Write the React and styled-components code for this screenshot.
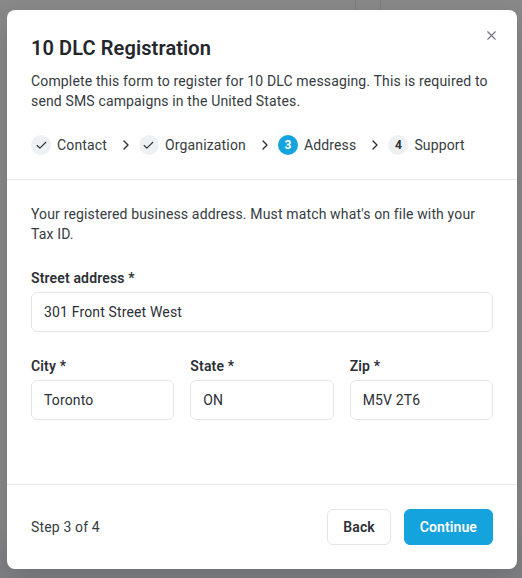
import React from 'react';
import styled, { createGlobalStyle } from 'styled-components';
import { Check, ChevronRight, X } from 'lucide-react';

const GlobalStyle = createGlobalStyle`
  * { box-sizing: border-box; }
  html, body { margin: 0; padding: 0; }
  body {
    font-family: Roboto, "Noto Sans", "Liberation Sans", sans-serif;
    color: #2b3036;
    letter-spacing: 0.15px;
    -webkit-font-smoothing: antialiased;
  }
`;

// ─── page behind the dialog ────────────────────────────────────────────────
const Page = styled.div`
  width: 522px;
  height: 578px;
  position: relative;
  overflow: hidden;
  background: linear-gradient(#f9f9f9 0, #f9f9f9 520px, #e7edf3 560px);
`;

const PageTopBar = styled.div`
  display: flex;
  height: 10px;
  padding-left: 355px;
  gap: 24px;
`;

const PageDivider = styled.div`
  width: 1px;
  background: #e4e4e4;
`;

// ─── overlay + dialog ──────────────────────────────────────────────────────
const Overlay = styled.div`
  position: absolute;
  inset: 0;
  background: rgba(0, 0, 0, 0.45);
  display: flex;
  align-items: flex-start;
  padding: 10px 5px 9px 7px;
`;

const Dialog = styled.div`
  position: relative;
  width: 510px;
  height: 559px;
  background: #fff;
  border-radius: 8px;
  display: flex;
  flex-direction: column;
  box-shadow: 0 10px 30px rgba(0, 0, 0, 0.15);
`;

const CloseButton = styled.button`
  position: absolute;
  top: 15px;
  right: 16px;
  width: 20px;
  height: 20px;
  border: 0;
  background: none;
  padding: 0;
  display: flex;
  align-items: center;
  justify-content: center;
  color: #6f757c;
  cursor: pointer;
`;

const Header = styled.div`
  padding: 24px 24px 24px;
  border-bottom: 1px solid #e6e9ed;
`;

const Title = styled.h2`
  margin: 0;
  font-size: 20px;
  line-height: 28px;
  font-weight: 600;
  letter-spacing: 0.1px;
  color: #23272c;
`;

const Lead = styled.p`
  margin: ${({ $top }) => $top || 0} 0 0;
  font-size: 14px;
  line-height: 20px;
  color: #363b41;
`;

const Steps = styled.div`
  display: flex;
  align-items: center;
  margin-top: 24px;
  height: 20px;
`;

const Step = styled.div`
  display: flex;
  align-items: center;
  gap: 6px;
  font-size: 14px;
  line-height: 20px;
  color: #363b41;
`;

const StepDot = styled.span`
  width: 20px;
  height: 20px;
  border-radius: 50%;
  display: inline-flex;
  align-items: center;
  justify-content: center;
  font-size: 12px;
  font-weight: 700;
  letter-spacing: 0;
  background: ${({ $current }) => ($current ? '#14a3dc' : '#eef1f4')};
  color: ${({ $current }) => ($current ? '#fff' : '#2b3036')};
`;

const Sep = styled.span`
  display: inline-flex;
  margin: 0 5px 0 11px;
  color: #2b3036;
`;

const Body = styled.div`
  flex: 1;
  padding: 24px;
`;

const Field = styled.label`
  display: flex;
  flex-direction: column;
  gap: 4px;
  min-width: 0;
`;

const Label = styled.span`
  font-size: 14px;
  line-height: 20px;
  font-weight: 600;
  color: #2b3036;
`;

const Input = styled.input`
  width: 100%;
  height: 40px;
  border: 1px solid #e2e6ea;
  border-radius: 6px;
  padding: 0 12px;
  font-family: inherit;
  font-size: 14px;
  letter-spacing: inherit;
  color: #2b3036;
  background: #fff;
  outline: none;
`;

const Stack = styled.div`
  display: flex;
  flex-direction: column;
  gap: 24px;
  margin-top: 24px;
`;

const Row = styled.div`
  display: grid;
  grid-template-columns: repeat(3, 1fr);
  gap: 16px;
`;

const Footer = styled.div`
  display: flex;
  align-items: center;
  justify-content: space-between;
  padding: 24px;
  border-top: 1px solid #e6e9ed;
`;

const StepCount = styled.span`
  font-size: 14px;
  color: #363b41;
`;

const Actions = styled.div`
  display: flex;
  gap: 13px;
`;

const Button = styled.button`
  height: 36px;
  padding: 0 15px;
  border-radius: 6px;
  font-family: inherit;
  font-size: 14px;
  font-weight: 600;
  letter-spacing: 0.1px;
  cursor: pointer;
  border: 1px solid ${({ $primary }) => ($primary ? '#14a3dc' : '#e2e6ea')};
  background: ${({ $primary }) => ($primary ? '#14a3dc' : '#fff')};
  color: ${({ $primary }) => ($primary ? '#fff' : '#2b3036')};
`;

const steps = [
  { label: 'Contact', done: true },
  { label: 'Organization', done: true },
  { label: 'Address', n: 3, current: true },
  { label: 'Support', n: 4 },
];

export default function App() {
  return (
    <>
      <GlobalStyle />
      <Page>
        <PageTopBar>
          <PageDivider />
          <PageDivider />
        </PageTopBar>

        <Overlay>
          <Dialog role="dialog">
            <CloseButton aria-label="Close">
              <X size={15} strokeWidth={1.75} />
            </CloseButton>

            <Header>
              <Title>10 DLC Registration</Title>
              <Lead $top="9px">
                Complete this form to register for 10 DLC messaging. This is required to send SMS
                campaigns in the United States.
              </Lead>
              <Steps>
                {steps.map((s, i) => (
                  <React.Fragment key={s.label}>
                    {i > 0 && (
                      <Sep>
                        <ChevronRight size={16} strokeWidth={2} />
                      </Sep>
                    )}
                    <Step>
                      <StepDot $current={s.current}>
                        {s.done ? <Check size={13} strokeWidth={2} /> : s.n}
                      </StepDot>
                      {s.label}
                    </Step>
                  </React.Fragment>
                ))}
              </Steps>
            </Header>

            <Body>
              <Lead>
                Your registered business address. Must match what's on file with your Tax ID.
              </Lead>
              <Stack>
                <Field>
                  <Label>Street address *</Label>
                  <Input defaultValue="301 Front Street West" />
                </Field>
                <Row>
                  <Field>
                    <Label>City *</Label>
                    <Input defaultValue="Toronto" />
                  </Field>
                  <Field>
                    <Label>State *</Label>
                    <Input defaultValue="ON" />
                  </Field>
                  <Field>
                    <Label>Zip *</Label>
                    <Input defaultValue="M5V 2T6" />
                  </Field>
                </Row>
              </Stack>
            </Body>

            <Footer>
              <StepCount>Step 3 of 4</StepCount>
              <Actions>
                <Button>Back</Button>
                <Button $primary>Continue</Button>
              </Actions>
            </Footer>
          </Dialog>
        </Overlay>
      </Page>
    </>
  );
}
